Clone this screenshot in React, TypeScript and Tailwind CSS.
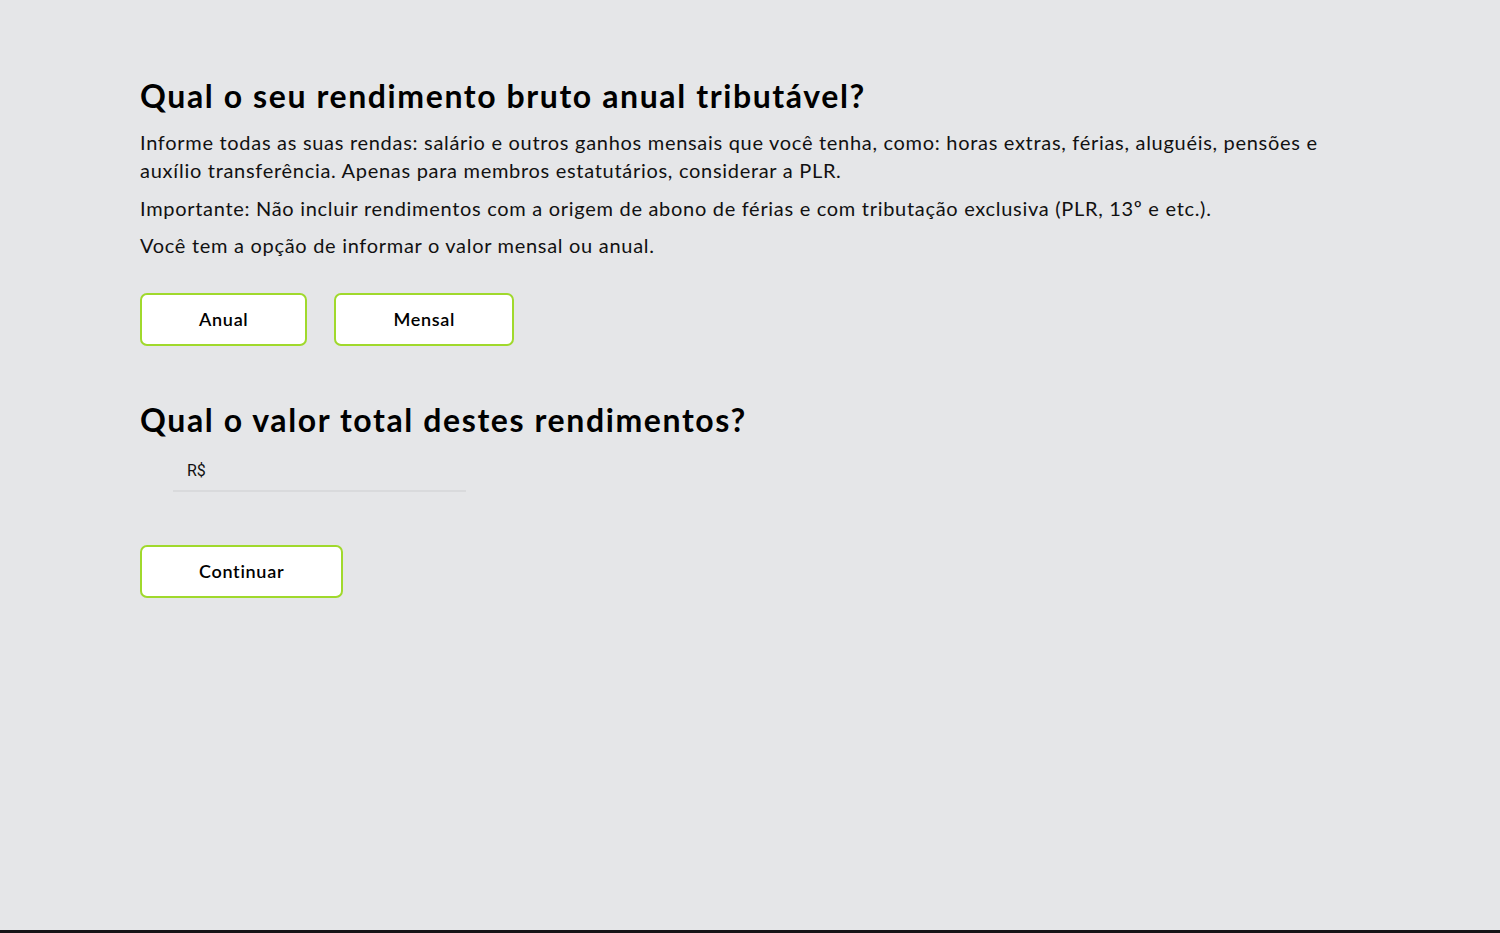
import React from "react";

const green = "border-[#a0d92c]";

function ChoiceButton({ label }: { label: string }) {
  return (
    <button
      className={`h-[53px] rounded-[7px] border-2 ${green} bg-white px-[57px] text-[18px] font-semibold tracking-[0.7px] text-black`}
    >
      {label}
    </button>
  );
}

export default function App() {
  return (
    <div className="flex min-h-[933px] flex-col bg-[#e5e6e8] font-['Lato','Open_Sans',sans-serif] text-black">
      <main className="flex-1 px-[140px] pt-[76px]">
        <h1 className="text-[32px] font-bold leading-[40px] tracking-[1.6px]">
          Qual o seu rendimento bruto anual tributável?
        </h1>
        <div className="mt-[12px] max-w-[1200px] text-[20px] leading-[28px] tracking-[0.7px] text-[#111]">
          <p>
            Informe todas as suas rendas: salário e outros ganhos mensais que você tenha, como: horas extras, férias,
            aluguéis, pensões e auxílio transferência. Apenas para membros estatutários, considerar a PLR.
          </p>
          <p className="mt-[10px]">
            Importante: Não incluir rendimentos com a origem de abono de férias e com tributação exclusiva (PLR, 13º e
            etc.).
          </p>
          <p className="mt-[9px]">Você tem a opção de informar o valor mensal ou anual.</p>
        </div>

        <div className="mt-[34px] flex gap-[27px]">
          <ChoiceButton label="Anual" />
          <ChoiceButton label="Mensal" />
        </div>

        <h2 className="mt-[54px] text-[32px] font-bold leading-[40px] tracking-[1.6px]">
          Qual o valor total destes rendimentos?
        </h2>
        <div className="ml-[33px] mt-[11px] flex h-[41px] w-[293px] items-center border-b-2 border-[#d9dadc] pl-[14px] font-['Roboto','Liberation_Sans',sans-serif] text-[16px] text-[#111]">
          R$
        </div>

        <div className="mt-[53px]">
          <ChoiceButton label="Continuar" />
        </div>
      </main>
      <div className="h-[3px] bg-[#151316]" />
    </div>
  );
}
